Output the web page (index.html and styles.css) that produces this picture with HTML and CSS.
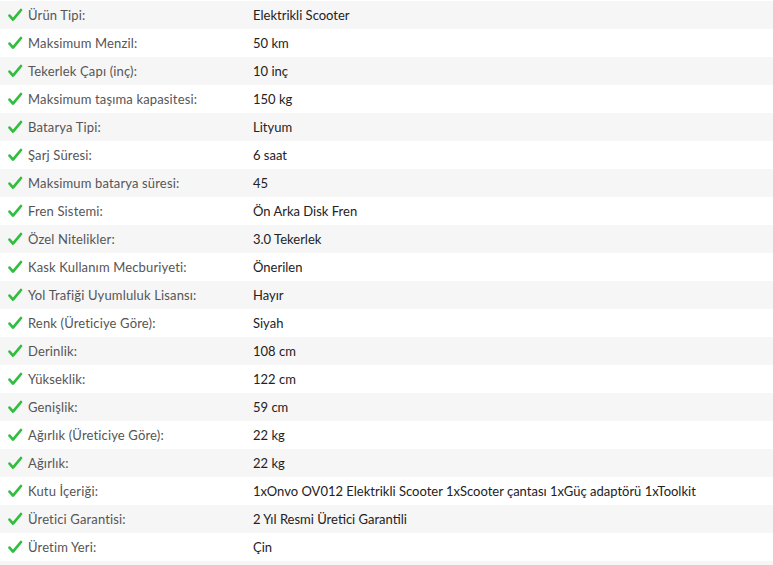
FILE: index.html
```html
<!DOCTYPE html>
<html lang="tr">
<head>
<meta charset="utf-8">
<link rel="stylesheet" href="styles.css">
</head>
<body>
<div class="specs">
  <div class="row"><div class="label"><svg class="check" viewBox="0 0 16 16"><path d="M2.5 8.6 L6 12.6 L14 3"/></svg>Ürün Tipi:</div><div class="value">Elektrikli Scooter</div></div>
  <div class="row"><div class="label"><svg class="check" viewBox="0 0 16 16"><path d="M2.5 8.6 L6 12.6 L14 3"/></svg>Maksimum Menzil:</div><div class="value">50 km</div></div>
  <div class="row"><div class="label"><svg class="check" viewBox="0 0 16 16"><path d="M2.5 8.6 L6 12.6 L14 3"/></svg>Tekerlek Çapı (inç):</div><div class="value">10 inç</div></div>
  <div class="row"><div class="label"><svg class="check" viewBox="0 0 16 16"><path d="M2.5 8.6 L6 12.6 L14 3"/></svg>Maksimum taşıma kapasitesi:</div><div class="value">150 kg</div></div>
  <div class="row"><div class="label"><svg class="check" viewBox="0 0 16 16"><path d="M2.5 8.6 L6 12.6 L14 3"/></svg>Batarya Tipi:</div><div class="value">Lityum</div></div>
  <div class="row"><div class="label"><svg class="check" viewBox="0 0 16 16"><path d="M2.5 8.6 L6 12.6 L14 3"/></svg>Şarj Süresi:</div><div class="value">6 saat</div></div>
  <div class="row"><div class="label"><svg class="check" viewBox="0 0 16 16"><path d="M2.5 8.6 L6 12.6 L14 3"/></svg>Maksimum batarya süresi:</div><div class="value">45</div></div>
  <div class="row"><div class="label"><svg class="check" viewBox="0 0 16 16"><path d="M2.5 8.6 L6 12.6 L14 3"/></svg>Fren Sistemi:</div><div class="value">Ön Arka Disk Fren</div></div>
  <div class="row"><div class="label"><svg class="check" viewBox="0 0 16 16"><path d="M2.5 8.6 L6 12.6 L14 3"/></svg>Özel Nitelikler:</div><div class="value">3.0 Tekerlek</div></div>
  <div class="row"><div class="label"><svg class="check" viewBox="0 0 16 16"><path d="M2.5 8.6 L6 12.6 L14 3"/></svg>Kask Kullanım Mecburiyeti:</div><div class="value">Önerilen</div></div>
  <div class="row"><div class="label"><svg class="check" viewBox="0 0 16 16"><path d="M2.5 8.6 L6 12.6 L14 3"/></svg>Yol Trafiği Uyumluluk Lisansı:</div><div class="value">Hayır</div></div>
  <div class="row"><div class="label"><svg class="check" viewBox="0 0 16 16"><path d="M2.5 8.6 L6 12.6 L14 3"/></svg>Renk (Üreticiye Göre):</div><div class="value">Siyah</div></div>
  <div class="row"><div class="label"><svg class="check" viewBox="0 0 16 16"><path d="M2.5 8.6 L6 12.6 L14 3"/></svg>Derinlik:</div><div class="value">108 cm</div></div>
  <div class="row"><div class="label"><svg class="check" viewBox="0 0 16 16"><path d="M2.5 8.6 L6 12.6 L14 3"/></svg>Yükseklik:</div><div class="value">122 cm</div></div>
  <div class="row"><div class="label"><svg class="check" viewBox="0 0 16 16"><path d="M2.5 8.6 L6 12.6 L14 3"/></svg>Genişlik:</div><div class="value">59 cm</div></div>
  <div class="row"><div class="label"><svg class="check" viewBox="0 0 16 16"><path d="M2.5 8.6 L6 12.6 L14 3"/></svg>Ağırlık (Üreticiye Göre):</div><div class="value">22 kg</div></div>
  <div class="row"><div class="label"><svg class="check" viewBox="0 0 16 16"><path d="M2.5 8.6 L6 12.6 L14 3"/></svg>Ağırlık:</div><div class="value">22 kg</div></div>
  <div class="row"><div class="label"><svg class="check" viewBox="0 0 16 16"><path d="M2.5 8.6 L6 12.6 L14 3"/></svg>Kutu İçeriği:</div><div class="value">1xOnvo OV012 Elektrikli Scooter 1xScooter çantası 1xGüç adaptörü 1xToolkit</div></div>
  <div class="row"><div class="label"><svg class="check" viewBox="0 0 16 16"><path d="M2.5 8.6 L6 12.6 L14 3"/></svg>Üretici Garantisi:</div><div class="value">2 Yıl Resmi Üretici Garantili</div></div>
  <div class="row"><div class="label"><svg class="check" viewBox="0 0 16 16"><path d="M2.5 8.6 L6 12.6 L14 3"/></svg>Üretim Yeri:</div><div class="value">Çin</div></div>
  <div class="row"><div class="label"></div><div class="value"></div></div>
</div>
</body>
</html>
```

FILE: styles.css
```css
html, body {
  margin: 0;
  padding: 0;
  background: #fff;
}
body {
  padding-top: 1px;
  font-family: Lato, "Open Sans", sans-serif;
  font-size: 13px;
}
.specs {
  display: flex;
  flex-direction: column;
}
.row {
  display: grid;
  grid-template-columns: 253px 1fr;
  height: 28px;
  align-items: center;
}
.row:nth-child(odd) {
  background: #f6f6f6;
}
.label {
  display: flex;
  align-items: center;
  color: #555;
  padding-left: 7px;
  letter-spacing: 0.15px;
}
.check {
  width: 16px;
  height: 16px;
  margin-right: 5px;
  fill: none;
  stroke: #2fbf3c;
  stroke-width: 2.7;
  stroke-linecap: round;
  stroke-linejoin: round;
}
.value {
  color: #222;
}
```
